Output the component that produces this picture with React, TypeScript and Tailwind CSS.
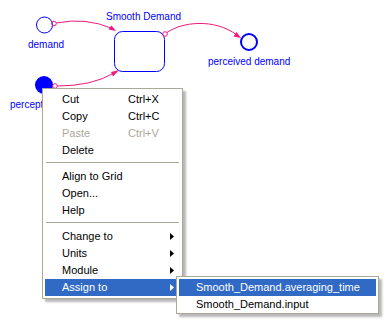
import { Fragment } from "react";

type MenuItem =
  | { kind: "item"; label: string; shortcut?: string; disabled?: boolean; sub?: boolean; active?: boolean }
  | { kind: "sep" };

const mainItems: MenuItem[] = [
  { kind: "item", label: "Cut", shortcut: "Ctrl+X" },
  { kind: "item", label: "Copy", shortcut: "Ctrl+C" },
  { kind: "item", label: "Paste", shortcut: "Ctrl+V", disabled: true },
  { kind: "item", label: "Delete" },
  { kind: "sep" },
  { kind: "item", label: "Align to Grid" },
  { kind: "item", label: "Open..." },
  { kind: "item", label: "Help" },
  { kind: "sep" },
  { kind: "item", label: "Change to", sub: true },
  { kind: "item", label: "Units", sub: true },
  { kind: "item", label: "Module", sub: true },
  { kind: "item", label: "Assign to", sub: true, active: true },
];

const PINK = "#ee1a7e";
const BLUE = "#0000ff";

function Arrow({ white }: { white?: boolean }) {
  return (
    <svg width="4" height="7" viewBox="0 0 4 7" className="block">
      <path d="M0 0 L4 3.5 L0 7 Z" fill={white ? "#ffffff" : "#000000"} />
    </svg>
  );
}

function Diagram() {
  return (
    <svg width="391" height="328" className="absolute left-0 top-0" shapeRendering="auto">
      {/* demand */}
      <circle cx="44.5" cy="25" r="8" fill="none" stroke={BLUE} strokeWidth="1" />
      <circle cx="54" cy="23.5" r="2.3" fill="none" stroke={PINK} strokeWidth="1" />
      <path d="M56.3 23 Q86 17 112 28.5" fill="none" stroke={PINK} strokeWidth="1" />
      <path d="M116 31 L108.5 29.5 L111.5 25.5 Z" fill={PINK} />

      {/* stock */}
      <rect x="114.5" y="31.5" width="50" height="40" rx="8" fill="none" stroke={BLUE} strokeWidth="1" />
      <circle cx="165" cy="34" r="2.3" fill="none" stroke={PINK} strokeWidth="1" />
      <path d="M167 32.5 C182 22 214 18 237 35" fill="none" stroke={PINK} strokeWidth="1" />
      <path d="M241 38 L233.5 36.5 L236.5 32 Z" fill={PINK} />

      {/* perceived demand */}
      <circle cx="249" cy="42" r="8" fill="none" stroke={BLUE} strokeWidth="2" />

      {/* perception */}
      <circle cx="44" cy="85" r="9" fill={BLUE} />
      <circle cx="55" cy="86" r="2.3" fill="none" stroke={PINK} strokeWidth="1" />
      <path d="M57.3 86 Q92 86 114 73" fill="none" stroke={PINK} strokeWidth="1" />
      <path d="M119 70 L113 76.5 L111 72 Z" fill={PINK} />
    </svg>
  );
}

export default function App() {
  return (
    <div
      className="relative w-[391px] h-[328px] bg-white overflow-hidden"
      style={{ fontFamily: '"Liberation Sans", Arial, sans-serif' }}
    >
      <Diagram />

      {/* labels */}
      <span className="absolute left-[106px] top-[11px] text-[10px] leading-[12px] text-[#0000ff]">Smooth Demand</span>
      <span className="absolute left-[28px] top-[39px] text-[10px] leading-[12px] text-[#0000ff]">demand</span>
      <span className="absolute left-[208px] top-[56px] text-[10px] leading-[12px] text-[#0000ff]">perceived demand</span>
      <span className="absolute left-[10px] top-[99px] text-[10px] leading-[12px] text-[#0000ff]">perception</span>

      {/* context menu */}
      <div className="absolute left-[42px] top-[88px] w-[141px] border border-[#aca899] bg-white px-[2px] pt-[2px] pb-[2px] shadow-[3px_3px_2px_rgba(0,0,0,0.28)] text-[11px] text-black">
        {mainItems.map((it, i) =>
          it.kind === "sep" ? (
            <div key={i} className="h-[9px] pt-[3px] px-[1px]">
              <div className="h-px bg-[#aca899]" />
            </div>
          ) : (
            <Fragment key={i}>
              <div
                className={`flex items-center h-[17px] pl-[17px] ${
                  it.active ? "bg-[#316ac5] text-white" : ""
                } ${it.disabled ? "text-[#aca899]" : ""}`}
              >
                <span className="w-[66px] whitespace-nowrap">{it.label}</span>
                {it.shortcut && <span className="whitespace-nowrap">{it.shortcut}</span>}
                {it.sub && (
                  <span className="ml-[42px]">
                    <Arrow white={it.active} />
                  </span>
                )}
              </div>
            </Fragment>
          )
        )}
      </div>

      {/* submenu */}
      <div className="absolute left-[176px] top-[276px] w-[203px] h-[38px] border border-[#aca899] bg-white px-[2px] pt-[2px] shadow-[3px_3px_2px_rgba(0,0,0,0.28)] text-[11px] text-black">
        <div className="flex items-center h-[17px] pl-[17px] bg-[#316ac5] text-white whitespace-nowrap">
          Smooth_Demand.averaging_time
        </div>
        <div className="flex items-center h-[17px] pl-[17px] whitespace-nowrap">Smooth_Demand.input</div>
      </div>
    </div>
  );
}
